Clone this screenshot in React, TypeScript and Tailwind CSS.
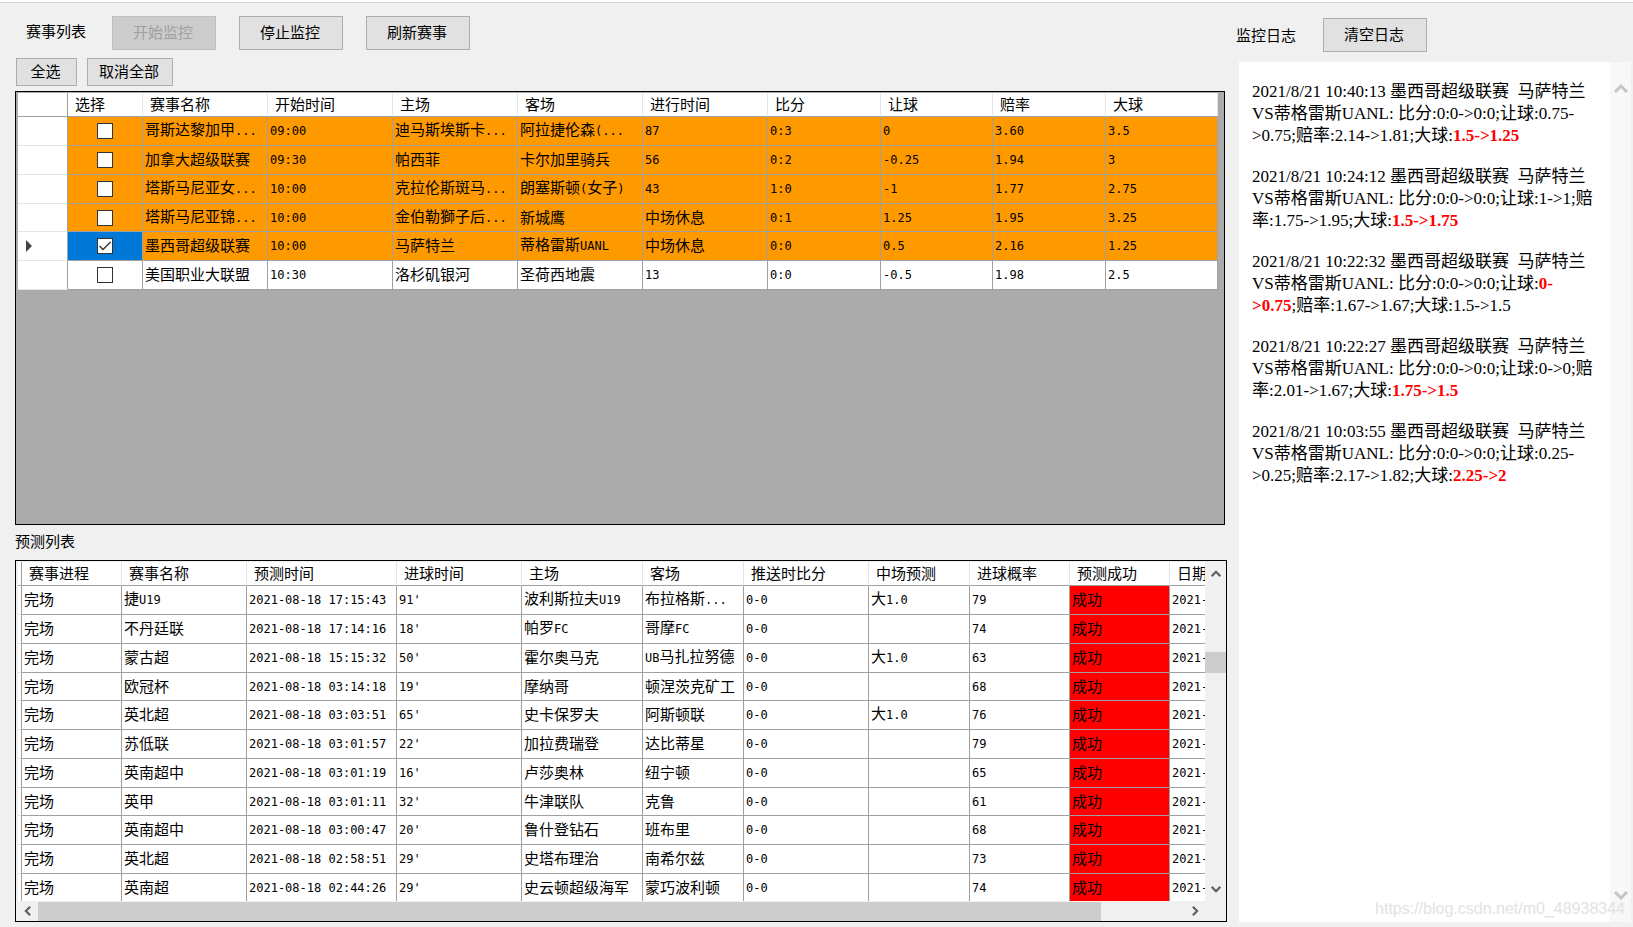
import { FC, ReactNode } from "react";

interface IColumn {
  title: string;
  width: string;
}

interface IMatch {
  cells: string[];
  live?: boolean;
  selected?: boolean;
}

const matchColumns: IColumn[] = [
  { title: "选择", width: "w-[75px]" },
  { title: "赛事名称", width: "w-[125px]" },
  { title: "开始时间", width: "w-[125px]" },
  { title: "主场", width: "w-[125px]" },
  { title: "客场", width: "w-[125px]" },
  { title: "进行时间", width: "w-[125px]" },
  { title: "比分", width: "w-[113px]" },
  { title: "让球", width: "w-[112px]" },
  { title: "赔率", width: "w-[113px]" },
  { title: "大球", width: "w-[112px]" },
];

const matches: IMatch[] = [
  { cells: ["哥斯达黎加甲...", "09:00", "迪马斯埃斯卡...", "阿拉捷伦森(...", "87", "0:3", "0", "3.60", "3.5"], live: true },
  { cells: ["加拿大超级联赛", "09:30", "帕西菲", "卡尔加里骑兵", "56", "0:2", "-0.25", "1.94", "3"], live: true },
  { cells: ["塔斯马尼亚女...", "10:00", "克拉伦斯斑马...", "朗塞斯顿(女子)", "43", "1:0", "-1", "1.77", "2.75"], live: true },
  { cells: ["塔斯马尼亚锦...", "10:00", "金伯勒獅子后...", "新城鹰", "中场休息", "0:1", "1.25", "1.95", "3.25"], live: true },
  { cells: ["墨西哥超级联赛", "10:00", "马萨特兰", "蒂格雷斯UANL", "中场休息", "0:0", "0.5", "2.16", "1.25"], live: true, selected: true },
  { cells: ["美国职业大联盟", "10:30", "洛杉矶银河", "圣荷西地震", "13", "0:0", "-0.5", "1.98", "2.5"] },
];

const forecastColumns: IColumn[] = [
  { title: "赛事进程", width: "w-[100px]" },
  { title: "赛事名称", width: "w-[125px]" },
  { title: "预测时间", width: "w-[150px]" },
  { title: "进球时间", width: "w-[125px]" },
  { title: "主场", width: "w-[121px]" },
  { title: "客场", width: "w-[101px]" },
  { title: "推送时比分", width: "w-[125px]" },
  { title: "中场预测", width: "w-[101px]" },
  { title: "进球概率", width: "w-[100px]" },
  { title: "预测成功", width: "w-[100px]" },
  { title: "日期", width: "w-[100px]" },
];

// league, time, minute, home, away, half-time forecast, probability
const forecasts: string[][] = [
  ["捷U19", "17:15:43", "91'", "波利斯拉夫U19", "布拉格斯...", "大1.0", "79"],
  ["不丹廷联", "17:14:16", "18'", "帕罗FC", "哥摩FC", "", "74"],
  ["蒙古超", "15:15:32", "50'", "霍尔奥马克", "UB马扎拉努德", "大1.0", "63"],
  ["欧冠杯", "03:14:18", "19'", "摩纳哥", "顿涅茨克矿工", "", "68"],
  ["英北超", "03:03:51", "65'", "史卡保罗夫", "阿斯顿联", "大1.0", "76"],
  ["苏低联", "03:01:57", "22'", "加拉费瑞登", "达比蒂星", "", "79"],
  ["英南超中", "03:01:19", "16'", "卢莎奥林", "纽宁顿", "", "65"],
  ["英甲", "03:01:11", "32'", "牛津联队", "克鲁", "", "61"],
  ["英南超中", "03:00:47", "20'", "鲁什登钻石", "班布里", "", "68"],
  ["英北超", "02:58:51", "29'", "史塔布理治", "南希尔兹", "", "73"],
  ["英南超", "02:44:26", "29'", "史云顿超级海军", "蒙巧波利顿", "", "74"],
];

const logs: { time: string; body: ReactNode }[] = [
  { time: "10:40:13", body: <>让球:0.75-&gt;0.75;赔率:2.14-&gt;1.81;大球:<Hot>1.5-&gt;1.25</Hot></> },
  { time: "10:24:12", body: <>让球:1-&gt;1;赔率:1.75-&gt;1.95;大球:<Hot>1.5-&gt;1.75</Hot></> },
  { time: "10:22:32", body: <>让球:<Hot>0-&gt;0.75</Hot>;赔率:1.67-&gt;1.67;大球:1.5-&gt;1.5</> },
  { time: "10:22:27", body: <>让球:0-&gt;0;赔率:2.01-&gt;1.67;大球:<Hot>1.75-&gt;1.5</Hot></> },
  { time: "10:03:55", body: <>让球:0.25-&gt;0.25;赔率:2.17-&gt;1.82;大球:<Hot>2.25-&gt;2</Hot></> },
];

function Hot({ children }: { children: ReactNode }) {
  return <b className="font-bold text-[#ff0000]">{children}</b>;
}

// latin runs are set in the mono face, a little smaller than the hanzi
const CellText: FC<{ value: string }> = ({ value }) => (
  <>
    {value.split(/([\x20-\x7e]+)/).map((run, i) =>
      i % 2 ? (
        <span key={i} className="font-['DejaVu_Sans_Mono',monospace] text-[12px]">
          {run}
        </span>
      ) : (
        run
      )
    )}
  </>
);

const Button: FC<{ children: ReactNode; className: string; disabled?: boolean }> = ({
  children,
  className,
  disabled,
}) => (
  <button
    type="button"
    disabled={disabled}
    className={`border border-[#adadad] bg-[#e1e1e1] pr-[2px] pb-[2px] leading-5 disabled:border-[#bfbfbf] disabled:bg-[#cccccc] disabled:text-[#a0a0a0] ${className}`}
  >
    {children}
  </button>
);

const Chevron: FC<{ className: string; points: string }> = ({ className, points }) => (
  <svg viewBox="0 0 14 14" className={className} fill="none" stroke="currentColor" aria-hidden="true">
    <polyline points={points} strokeWidth="3" />
  </svg>
);

const UP = "1,10 7,4 13,10";
const DOWN = "1,4 7,10 13,4";
const LEFT = "10,1 4,7 10,13";
const RIGHT = "4,1 10,7 4,13";

const HeadRow: FC<{ columns: IColumn[]; stub: string }> = ({ columns, stub }) => (
  <thead>
    <tr className="h-6">
      <td className={`border-r border-b border-[#a0a0a0] bg-white ${stub}`} />
      {columns.map((col) => (
        <th
          key={col.title}
          scope="col"
          className={`border-r border-b border-r-[#e5e5e5] border-b-[#a0a0a0] bg-white pb-[2px] pl-[7px] text-left font-normal whitespace-nowrap ${col.width}`}
        >
          {col.title}
        </th>
      ))}
    </tr>
  </thead>
);

const cell = "border-r border-b border-[#a0a0a0] pb-[2px] pl-[2px] whitespace-nowrap overflow-hidden";

const MatchGrid = () => (
  <div className="mr-[11px] ml-[15px] flex-1 overflow-hidden border border-black bg-[#ababab] pt-px pl-[2px]">
    <table className="w-[1200px] table-fixed border-separate border-spacing-0 leading-5">
      <HeadRow columns={matchColumns} stub="w-[50px]" />
      <tbody>
        {matches.map((match) => (
          <tr
            key={match.cells[0]}
            className={`h-[29px] nth-[4n]:h-7 ${match.live ? "bg-[#ff9900]" : "bg-white"}`}
          >
            <td className="border-r border-b border-r-[#a0a0a0] border-b-[#e5e5e5] bg-white pl-2">
              {match.selected && (
                <svg viewBox="0 0 6 12" className="h-3 w-[6px] fill-[#444444]" aria-hidden="true">
                  <polygon points="0,0 6,6 0,12" />
                </svg>
              )}
            </td>
            <td className={`border-r border-b border-[#a0a0a0] ${match.selected ? "bg-[#0078d7]" : ""}`}>
              <div className="flex justify-center">
                <label className="relative block size-4">
                  <input
                    type="checkbox"
                    aria-label={match.cells[0]}
                    defaultChecked={match.selected}
                    className="peer block size-4 appearance-none border border-[#333333] bg-white"
                  />
                  <svg
                    viewBox="0 0 16 16"
                    className="pointer-events-none absolute inset-0 hidden size-4 peer-checked:block"
                    fill="none"
                    stroke="#333333"
                    strokeWidth="1.4"
                    aria-hidden="true"
                  >
                    <polyline points="2.5,8 6,11.5 13.5,4" />
                  </svg>
                </label>
              </div>
            </td>
            {match.cells.map((value, i) => (
              <td key={i} className={cell}>
                <CellText value={value} />
              </td>
            ))}
          </tr>
        ))}
      </tbody>
    </table>
  </div>
);

const ForecastGrid = () => (
  <div className="mr-[9px] ml-[15px] border border-black bg-[#f0f0f0] pt-px pl-[2px]">
    <div className="flex">
      <div className="min-w-0 flex-1 overflow-hidden">
        <table className="w-[1252px] table-fixed border-separate border-spacing-0 leading-5">
          <HeadRow columns={forecastColumns} stub="w-1" />
          <tbody className="bg-white">
            {forecasts.map(([league, time, minute, home, away, half, rate]) => (
              <tr key={time} className="h-[29px] nth-[4n]:h-7 last:h-[27px] last:*:border-b-0">
                <td className="border-r border-b border-r-[#a0a0a0] border-b-[#e5e5e5]" />
                {["完场", league, `2021-08-18 ${time}`, minute, home, away, "0-0", half, rate, "成功", "2021-08-18"].map(
                  (value, i) => (
                    <td key={i} className={`${cell} ${i === 9 ? "bg-[#ff0000]" : ""}`}>
                      <CellText value={value} />
                    </td>
                  )
                )}
              </tr>
            ))}
          </tbody>
        </table>
      </div>
      <div className="flex w-[21px] flex-col items-center text-[#606060]">
        <button type="button" aria-label="向上滚动" className="flex h-6 items-center">
          <Chevron points={UP} className="size-[10px]" />
        </button>
        <div className="mt-[66px] h-[21px] w-full bg-[#cdcdcd]" />
        <button type="button" aria-label="向下滚动" className="mt-auto flex h-6 items-center">
          <Chevron points={DOWN} className="size-[10px]" />
        </button>
      </div>
    </div>
    <div className="flex h-5 items-center pr-[21px] text-[#606060]">
      <button type="button" aria-label="向左滚动" className="flex w-5 justify-center">
        <Chevron points={LEFT} className="size-[10px]" />
      </button>
      <div className="mr-[84px] h-[19px] flex-1 bg-[#cdcdcd]" />
      <button type="button" aria-label="向右滚动" className="flex w-5 justify-center">
        <Chevron points={RIGHT} className="size-[10px]" />
      </button>
    </div>
  </div>
);

const LogPanel = () => (
  <aside className="flex w-[397px] shrink-0 flex-col pt-[15px] pb-[5px]">
    <div className="flex items-center gap-[27px]">
      <h2>监控日志</h2>
      <Button className="h-[34px] w-[104px]">清空日志</Button>
    </div>
    <div className="mt-[10px] mr-[2px] ml-[3px] flex flex-1 bg-white">
      <div className="flex-1 py-[19px] pr-[15px] pl-[13px] font-['Liberation_Serif','Noto_Sans_CJK_SC',serif] text-[17px] leading-[22px]">
        {logs.map(({ time, body }) => (
          <p key={time} className="mb-[19px]">
            2021/8/21 {time} 墨西哥超级联赛&nbsp; 马萨特兰VS蒂格雷斯UANL: 比分:0:0-&gt;0:0;{body}
          </p>
        ))}
      </div>
      <div className="flex w-[21px] flex-col items-center justify-between bg-[#f8f8f8] py-5 text-[#c4c4c4]">
        <button type="button" aria-label="日志向上滚动">
          <Chevron points={UP} className="size-[14px]" />
        </button>
        <button type="button" aria-label="日志向下滚动">
          <Chevron points={DOWN} className="size-[14px]" />
        </button>
      </div>
    </div>
  </aside>
);

export default function App() {
  return (
    <div className="relative min-h-screen border-t-2 border-white bg-[#f0f0f0] font-['Noto_Sans_CJK_SC',sans-serif] text-[15px] leading-5 text-black">
      <div className="flex min-h-[calc(100vh-2px)] border-t border-[#d0d0d0]">
        <main className="flex min-w-0 flex-1 flex-col pt-[13px] pb-[5px]">
          <div className="flex items-center pl-[26px]">
            <h1 className="pb-1">赛事列表</h1>
            <Button disabled className="ml-[26px] h-[34px] w-[104px]">开始监控</Button>
            <Button className="ml-[23px] h-[34px] w-[104px]">停止监控</Button>
            <Button className="ml-[23px] h-[34px] w-[104px]">刷新赛事</Button>
          </div>
          <div className="mt-2 mb-[5px] flex gap-[10px] pl-4">
            <Button className="h-7 w-[61px]">全选</Button>
            <Button className="h-7 w-[86px]">取消全部</Button>
          </div>
          <MatchGrid />
          <h2 className="mt-[6px] mb-[9px] pl-[15px]">预测列表</h2>
          <ForecastGrid />
        </main>
        <LogPanel />
      </div>
      <a
        href="https://blog.csdn.net/m0_48938344"
        className="absolute right-2 bottom-2 font-['Liberation_Sans',sans-serif] text-[16px] text-[#e2e2e2]"
      >
        https://blog.csdn.net/m0_48938344
      </a>
    </div>
  );
}
